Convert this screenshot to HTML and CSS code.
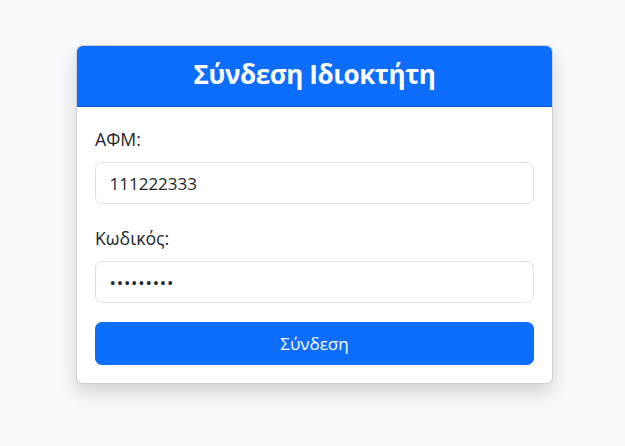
FILE: index.html
```html
<!DOCTYPE html>
<html lang="el">
<head>
<meta charset="utf-8">
<link rel="stylesheet" href="styles.css">
</head>
<body>
<div class="page">
  <div class="card">
    <div class="card-header"><h2 class="title">Σύνδεση Ιδιοκτήτη</h2></div>
    <form class="card-body">
      <div class="group">
        <label class="label" for="afm">ΑΦΜ:</label>
        <input class="control" id="afm" type="text" value="111222333">
      </div>
      <div class="group group-last">
        <label class="label" for="pw">Κωδικός:</label>
        <input class="control control-pw" id="pw" type="password" value="123456789">
      </div>
      <button class="btn" type="button">Σύνδεση</button>
    </form>
  </div>
</div>
</body>
</html>
```
FILE: styles.css
```css
* { box-sizing: border-box; }
html, body { margin: 0; padding: 0; }
body {
  background: #f8f9fa;
  font-family: "Open Sans", "Noto Sans", sans-serif;
  color: #212529;
  width: 625px;
  height: 446px;
  overflow: hidden;
}
.page {
  display: flex;
  justify-content: center;
  padding: 45px 0 0 4px;
}
.card {
  width: 477px;
  background: #fff;
  border: 1px solid rgba(0,0,0,0.175);
  border-radius: 6.75px;
  box-shadow: 0 9px 18px rgba(0,0,0,0.15);
  overflow: hidden;
}
.card-header {
  background: #0d6efd;
  height: 61px;
  display: flex;
  align-items: center;
  justify-content: center;
  border-bottom: 1px solid rgba(0,0,0,0.175);
}
.title {
  margin: 0 0 2px;
  color: #fff;
  font-size: 26px;
  font-weight: 700;
  letter-spacing: -0.4px;
  line-height: 1.2;
}
.card-body {
  padding: 19px 18px 18px;
  display: flex;
  flex-direction: column;
}
.group {
  display: flex;
  flex-direction: column;
  margin-bottom: 21px;
}
.group-last { margin-bottom: 19px; }
.label {
  font-size: 17.7px;
  line-height: 27px;
  margin-bottom: 9px;
}
.control {
  height: 42px;
  font-family: inherit;
  font-size: 17px;
  color: #212529;
  padding: 0 13.5px;
  border: 1px solid #dee2e6;
  border-radius: 6.75px;
  background: #fff;
  outline: none;
}
.control-pw { letter-spacing: 0.8px; }
.btn {
  height: 43px;
  background: #0d6efd;
  border: 1px solid #0d6efd;
  border-radius: 6.75px;
  color: #fff;
  font-family: inherit;
  font-size: 17px;
}
```
